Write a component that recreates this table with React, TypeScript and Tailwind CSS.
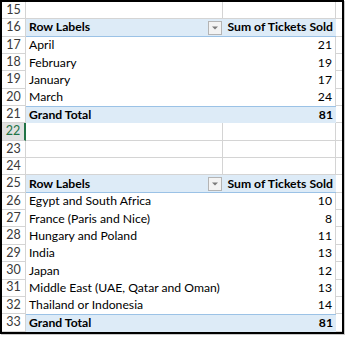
type PivotRow = { label: string; value: number };

const months: PivotRow[] = [
  { label: "April", value: 21 },
  { label: "February", value: 19 },
  { label: "January", value: 17 },
  { label: "March", value: 24 },
];

const regions: PivotRow[] = [
  { label: "Egypt and South Africa", value: 10 },
  { label: "France (Paris and Nice)", value: 8 },
  { label: "Hungary and Poland", value: 11 },
  { label: "India", value: 13 },
  { label: "Japan", value: 12 },
  { label: "Middle East (UAE, Qatar and Oman)", value: 13 },
  { label: "Thailand or Indonesia", value: 14 },
];

function RowNum({ n, selected }: { n: number; selected?: boolean }) {
  return (
    <div
      className={
        selected
          ? "flex items-center justify-center text-[12.5px] bg-[#e1e1e1] text-[#217346] border-b border-b-[#d4d4d4] border-r-2 border-r-[#217346]"
          : "flex items-center justify-center text-[12.5px] text-[#3a3a3a] border-b border-r border-[#d4d4d4]"
      }
    >
      {n}
    </div>
  );
}

function EmptyRow({ n, selected }: { n: number; selected?: boolean }) {
  return (
    <>
      <RowNum n={n} selected={selected} />
      <div className="border-b border-r border-[#d4d4d4]" />
      <div className="border-b border-r border-[#d4d4d4]" />
      <div className="border-b border-[#d4d4d4]" />
    </>
  );
}

function HeaderRow({ n }: { n: number }) {
  return (
    <>
      <RowNum n={n} />
      <div className="col-span-2 flex items-center bg-[#ddebf7] border-b border-[#9bc2e6] font-bold text-black">
        <span className="flex-1 pl-[3px]">Row Labels</span>
        <span className="flex h-[14px] w-[14px] items-center justify-center border border-[#b4b4b4] bg-[#f3f3f3] mr-[1px]">
          <svg width="6" height="4" viewBox="0 0 6 4">
            <path d="M0 0.5h6L3 3.5z" fill="#7a7a7a" />
          </svg>
        </span>
        <span className="w-[113px] text-right pr-[3px] whitespace-nowrap">Sum of Tickets Sold</span>
      </div>
      <div className="border-b border-[#d4d4d4]" />
    </>
  );
}

function DataRow({ n, row }: { n: number; row: PivotRow }) {
  return (
    <>
      <RowNum n={n} />
      <div className="relative z-10 flex items-center pl-[3px] text-black whitespace-nowrap">{row.label}</div>
      <div className="flex items-center justify-end pr-[3px] text-black border-r border-[#d4d4d4]">
        {row.value}
      </div>
      <div className="border-b border-[#d4d4d4]" />
    </>
  );
}

function TotalRow({ n, total }: { n: number; total: number }) {
  return (
    <>
      <RowNum n={n} />
      <div className="col-span-2 flex items-center bg-[#ddebf7] border-t border-[#9bc2e6] font-bold text-black">
        <span className="flex-1 pl-[3px]">Grand Total</span>
        <span className="pr-[3px]">{total}</span>
      </div>
      <div className="border-b border-[#d4d4d4]" />
    </>
  );
}

export default function App() {
  const sum = (rows: PivotRow[]) => rows.reduce((a, r) => a + r.value, 0);
  return (
    <div className="w-[347px] h-[337px] bg-white">
      <div
        className="w-[344px] border-2 border-black shadow-[1px_1px_0_#c8c8c8] grid grid-cols-[24px_197px_113px_6px] auto-rows-[17.35px] text-[12.2px] leading-none"
        style={{ fontFamily: "Lato, 'Open Sans', sans-serif" }}
      >
        <EmptyRow n={15} />
        <HeaderRow n={16} />
        {months.map((r, i) => (
          <DataRow key={r.label} n={17 + i} row={r} />
        ))}
        <TotalRow n={21} total={sum(months)} />
        <EmptyRow n={22} selected />
        <EmptyRow n={23} />
        <EmptyRow n={24} />
        <HeaderRow n={25} />
        {regions.map((r, i) => (
          <DataRow key={r.label} n={26 + i} row={r} />
        ))}
        <TotalRow n={33} total={sum(regions)} />
      </div>
    </div>
  );
}
